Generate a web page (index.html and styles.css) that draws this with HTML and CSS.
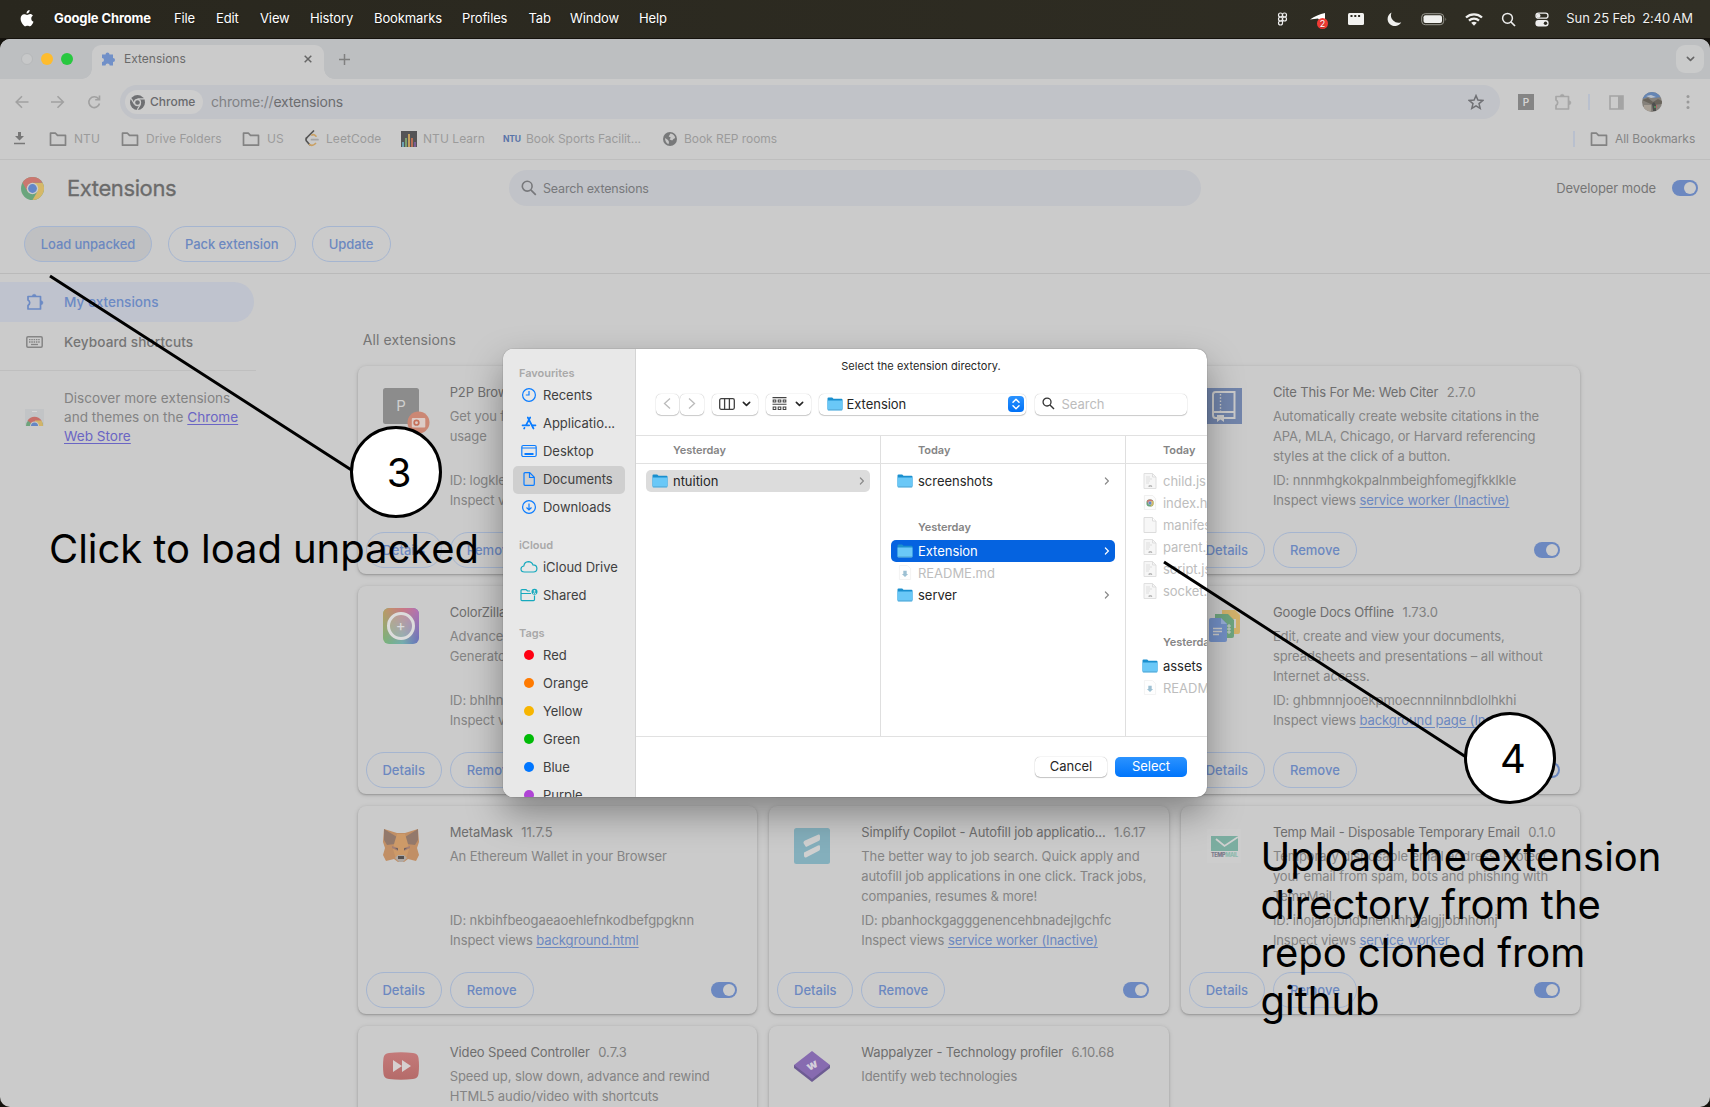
FILE: index.html
```html
<!DOCTYPE html>
<html lang="en">
<head>
<meta charset="utf-8">
<title>Extensions</title>
<link rel="stylesheet" href="styles.css">
</head>
<body>
<svg width="0" height="0" class="defs">
  <defs>
    <symbol id="folder-line" viewBox="0 0 18 16"><path d="M1.500 2.200h5l2 2.200h8v9.800h-15z" fill="none" stroke="currentColor" stroke-width="1.700" stroke-linejoin="round"/></symbol>
    <symbol id="puzzle-line" viewBox="0 0 18 18"><path d="M2 3.500h12.500v12.500H2v-3.600q1.700-1 1.700-2.700T2 7z" fill="none" stroke="currentColor" stroke-width="1.700" stroke-linejoin="round"/><path d="M6.200 3.200a2 2 0 0 1 4 0zM15 7.700a2 2 0 0 1 0 4z" fill="currentColor" stroke="currentColor" stroke-width=".4"/></symbol>
    <symbol id="magnify" viewBox="0 0 16 16"><circle cx="6.200" cy="6.200" r="4.900" fill="none" stroke="currentColor" stroke-width="1.600"/><path d="M9.800 9.800l5 5" stroke="currentColor" stroke-width="1.700"/></symbol>
    <symbol id="chevron-r" viewBox="0 0 6 10"><path d="M1.400 2L4.400 5 1.400 8" fill="none" stroke="currentColor" stroke-width="1.200" stroke-linecap="round"/></symbol>
    <symbol id="chevron-d" viewBox="0 0 10 6"><path d="M1.500 1.200L5 4.600 8.500 1.200" fill="none" stroke="currentColor" stroke-width="1.800" stroke-linecap="round" stroke-linejoin="round"/></symbol>
    <symbol id="folder-blue" viewBox="0 0 16 14"><path d="M.5 1.500q0-1 1-1h3.700l1.300 1.300h8q1 0 1 1V12h-15z" fill="#1a8fce"/><path d="M.5 3.600h15v8.600q0 1-1 1h-13q-1 0-1-1z" fill="#6ac8f7"/><path d="M.5 12.300h15q0 1.200-1 1.200h-13q-1 0-1-1.200z" fill="#58aedb"/></symbol>
    <symbol id="doc" viewBox="0 0 14 16"><path d="M1 .5h8.500L13 4v11.500H1z" fill="#f7f7f7" stroke="#dcdcdc"/><path d="M9.500.5V4H13" fill="#fff" stroke="#dcdcdc"/></symbol>
    <symbol id="doc-js" viewBox="0 0 14 16"><path d="M1 .5h8.500L13 4v11.500H1z" fill="#f6f6f6" stroke="#e0e0e0"/><path d="M9.500.5V4H13M3 4h4M3 6h6M3 8h4M3 10h3" fill="none" stroke="#dedede"/><path d="M5.800 13.700q.3-.900 1-.900h1q.7 0 1 .900" fill="none" stroke="#aaa" stroke-width="1.200"/></symbol>
    <symbol id="doc-md" viewBox="0 0 14 16"><path d="M1 .5h8.500L13 4v11.500H1z" fill="#fefefe" stroke="#f2f2f2"/><path d="M5.200 6h3.600v3.600h1.500L7 12.800 3.700 9.600h1.500z" fill="#9dc0d3"/></symbol>
    <symbol id="chrome-color" viewBox="0 0 24 24"><circle cx="12" cy="12" r="12" fill="#6aa57d"/><path d="M12 12V6h10.400A12 12 0 0 1 12 24l5.200-9z" fill="#d6b868"/><path d="M12 6h10.400A12 12 0 0 0 1.600 6l5.200 9z" fill="#cb7770"/><circle cx="12" cy="12" r="6" fill="#cbcbcb"/><circle cx="12" cy="12" r="4.600" fill="#6487c8"/></symbol>
    <symbol id="doc-chrome" viewBox="0 0 14 16"><path d="M1 .5h9L13 4v11.500H1z" fill="#fcfcfc" stroke="#eee"/><use href="#chrome-color" x="3" y="4.500" width="8" height="8"/></symbol>
  </defs>
</svg>

<header class="menubar">
  <svg class="apple" width="14" height="17" viewBox="0 0 14 17"><path d="M9.600 0c.1 1-.3 1.900-.8 2.500-.6.700-1.400 1.100-2.200 1-.1-.9.300-1.800.8-2.400C8 .500 8.900.1 9.600 0zM12.900 5.800c-1.100.7-1.700 1.600-1.600 2.900 0 1.500.9 2.500 2.200 3-.4 1.300-1 2.400-1.800 3.400-.6.800-1.200 1.200-1.900 1.200-.8 0-1.200-.5-2.300-.5s-1.600.5-2.300.5c-.8 0-1.500-.7-2.100-1.500C1.800 13.200.6 11.100.6 8.800c0-3 1.700-4.600 3.500-4.600 1.200 0 2 .700 3 .700.900 0 1.700-.8 3.100-.8 1.100 0 2.100.6 2.700 1.700z" fill="#fff"/></svg>
  <b class="m-app">Google Chrome</b>
  <span class="m-file">File</span><span class="m-edit">Edit</span><span class="m-view">View</span><span class="m-history">History</span><span class="m-bookmarks">Bookmarks</span><span class="m-profiles">Profiles</span><span class="m-tab">Tab</span><span class="m-window">Window</span><span class="m-help">Help</span>
  <svg class="status" width="280" height="30" viewBox="1270 4 280 30">
    <g fill="none" stroke="#eee" stroke-width="1.200"><rect x="1278.500" y="13" width="4" height="4" rx="2"/><rect x="1282.500" y="13" width="4" height="4" rx="2"/><rect x="1278.500" y="17" width="4" height="4" rx="2"/><circle cx="1284.500" cy="19" r="2"/><path d="M1282.500 21v2a2 2 0 1 1-2-2z"/></g>
    <path d="M1310 19.500q7-5 15-6.500v6l-4 3-3-3.500z" fill="#fff"/><circle cx="1322.500" cy="23.500" r="5.500" fill="#f23b34"/><text x="1322.500" y="26.700" font-size="9" text-anchor="middle" fill="#fff">2</text>
    <rect x="1348" y="13" width="16" height="12" rx="1.500" fill="#f2f2f0"/><path d="M1350.500 15h2v2h-2zM1354.300 15h2v2h-2zM1358.100 15h2v2h-2z" fill="#2d2b22"/>
    <path d="M1391.500 12.500a7.200 7.200 0 1 0 9.700 9.700 7.500 7.500 0 0 1-9.700-9.700z" fill="#f0f0ee"/>
    <rect x="1421.700" y="13.700" width="22" height="11" rx="3.500" fill="none" stroke="#999890"/><rect x="1423.500" y="15.300" width="18.500" height="7.800" rx="2" fill="#efefed"/><path d="M1445.500 17.500q1.500 1.500 0 3.500z" fill="#999890"/>
    <g fill="none" stroke="#f0f0ee" stroke-width="2.300"><path d="M1466 17.500a12 12 0 0 1 16 0M1469 20.600a7.500 7.500 0 0 1 10 0"/></g><path d="M1471.200 22.700q2.800-2 5.600 0l-2.800 3z" fill="#f0f0ee"/>
    <circle cx="1507.500" cy="18.300" r="4.900" fill="none" stroke="#eee" stroke-width="1.500"/><path d="M1511 22l4 4" stroke="#eee" stroke-width="1.700"/>
    <rect x="1536" y="13.200" width="12" height="5" rx="2.500" fill="none" stroke="#eee" stroke-width="1.300"/><circle cx="1538.500" cy="15.700" r="2" fill="#eee"/><rect x="1535.400" y="20" width="13.200" height="6.500" rx="3" fill="#eee"/><circle cx="1545.500" cy="23.200" r="1.700" fill="#2d2b22"/>
  </svg>
  <span class="clock">Sun 25 Feb&nbsp; 2:40&thinsp;AM</span>
</header>

<div class="browser">
  <div class="tabstrip">
    <i class="light off"></i><i class="light yellow"></i><i class="light green"></i>
    <div class="tab">
      <svg width="15" height="15" viewBox="0 0 15 15"><path d="M1 3.500h3.500a2 2 0 1 1 4 0H12V7a2 2 0 1 1 0 4v3.500H8.700a2 2 0 1 0-4.200 0H1V11a2 2 0 1 0 0-4z" fill="#7190c8"/></svg>
      <span>Extensions</span>
      <svg class="close" width="8" height="8" viewBox="0 0 8 8"><path d="M.7.7l6.600 6.600M7.300.7L.7 7.300" stroke="#666" stroke-width="1.500"/></svg>
    </div>
    <svg class="plus" width="11" height="11" viewBox="0 0 11 11"><path d="M5.500 0v11M0 5.500h11" stroke="#808080" stroke-width="1.500"/></svg>
    <div class="tabsearch"><svg width="9" height="6"><use href="#chevron-d"/></svg></div>
  </div>

  <div class="toolbar">
    <svg class="nav" width="88" height="16" viewBox="0 0 88 16" fill="none" stroke="#a1a1a1" stroke-width="1.600"><path d="M14.500 8H2.500M8 2.200L2.200 8 8 13.800M37 8h12M43.500 2.200L49.300 8l-5.800 5.800"/><path d="M84.500 4.800A5.400 5.400 0 1 0 85.500 9.500M85.500 1.500v4.200h-4.300"/></svg>
    <div class="omnibox">
      <div class="chip"><svg width="15" height="15" viewBox="0 0 16 16"><circle cx="8" cy="8" r="8" fill="#6f7073"/><circle cx="8" cy="8" r="3.200" fill="#6f7073" stroke="#cdcdcd" stroke-width="1.400"/><path d="M8 4.200h7M4.800 9.800L1.300 3.900M11.200 9.800L7.700 15.800" stroke="#cdcdcd" stroke-width="1.300"/></svg><span>Chrome</span></div>
      <span class="url"><span class="scheme">chrome://</span>extensions</span>
      <svg class="star" width="16" height="16" viewBox="0 0 16 16"><path d="M8 1.600l1.900 4.500 4.800.4-3.700 3.100 1.200 4.800L8 11.800l-4.200 2.600L5 9.600 1.300 6.500l4.800-.4z" fill="none" stroke="#707175" stroke-width="1.500"/></svg>
    </div>
    <div class="pbox">P</div>
    <svg class="t-puzzle" width="18" height="18"><use href="#puzzle-line"/></svg>
    <i class="vsep"></i>
    <svg class="t-panel" width="15" height="15" viewBox="0 0 15 15"><path d="M1 1h13v13H1z" fill="none" stroke="#a4a4a4" stroke-width="1.600"/><path d="M9 1h5v13H9z" fill="#a4a4a4"/></svg>
    <svg class="avatar" width="20" height="20" viewBox="0 0 20 20"><clipPath id="av"><circle cx="10" cy="10" r="10"/></clipPath><g clip-path="url(#av)"><path d="M0 0h20v20H0z" fill="#85817b"/><path d="M0 0h20v5L12 6 6 5 0 7z" fill="#6485b4"/><path d="M4 4l5-1 5 2-5 1z" fill="#b8c0cb"/><path d="M0 8l6-2 5 4 5-3 4 2v3l-9 1z" fill="#69645c"/><path d="M2 13h7v6H2z" fill="#a79f95"/><path d="M10 12l2-2 2 3v6h-3z" fill="#4e4f4e"/><path d="M12 14h2v2h-2z" fill="#54885c"/><path d="M14 13h1v3h-1z" fill="#b16666"/></g></svg>
    <svg class="dots" width="4" height="16" viewBox="0 0 4 16" fill="#999"><circle cx="2" cy="2.500" r="1.500"/><circle cx="2" cy="8" r="1.500"/><circle cx="2" cy="13.500" r="1.500"/></svg>
  </div>

  <div class="bookmarks">
    <svg class="dl" width="11" height="13" viewBox="0 0 11 13"><path d="M4 0h3v4h3L5.500 8.500 1 4h3zM0 10.700h11v1.600H0z" fill="#777"/></svg>
    <svg class="fl" width="18" height="16"><use href="#folder-line"/></svg><span class="b1">NTU</span>
    <svg class="fl" width="18" height="16"><use href="#folder-line"/></svg><span class="b2">Drive Folders</span>
    <svg class="fl" width="18" height="16"><use href="#folder-line"/></svg><span class="b3">US</span>
    <svg class="b4i" width="14" height="17" viewBox="0 0 14 17" fill="none" stroke-width="1.700" stroke-linecap="round"><path d="M8.500 1L1.500 8" stroke="#555"/><path d="M1.500 8q-1 1.500 0 3l3 3.500" stroke="#555"/><path d="M4.500 14.500q3 2 6-1M7 5q2-1 4 1.200" stroke="#c9a063"/><path d="M6.500 9.700H13" stroke="#a5a5a5"/></svg><span class="b4">LeetCode</span>
    <svg class="b5i" width="16" height="16" viewBox="0 0 16 16"><path d="M0 0h16v16H0z" fill="#545456"/><path d="M1 11h2v5H1z" fill="#6ca2b4"/><path d="M4 7h2v9H4z" fill="#7b9f6f"/><path d="M7 3h2v13H7z" fill="#c3a05c"/><path d="M10 7h2v9h-2z" fill="#b96f55"/><path d="M13 11h2v5h-2z" fill="#7b5c93"/></svg><span class="b5">NTU Learn</span>
    <b class="ntulogo">NTU</b><span class="b6">Book Sports Facilit...</span>
    <svg class="b7i" width="14" height="14" viewBox="0 0 14 14"><circle cx="7" cy="7" r="7" fill="#78797a"/><path d="M7.500 1.500q4 .5 4.700 4.500-2 .5-3 2.500l-2.500-1 1-2-2-1zM2 6l3 2 1 2-.5 2.200Q2 10.500 2 6z" fill="#c7c7c7"/></svg><span class="b7">Book REP rooms</span>
    <i class="vsep right"></i><svg class="fl" width="18" height="16"><use href="#folder-line"/></svg><span class="ball">All Bookmarks</span>
  </div>

  <div class="exthead">
    <svg class="clogo" width="23" height="23"><use href="#chrome-color" width="23" height="23"/></svg>
    <h1>Extensions</h1>
    <div class="search"><svg width="16" height="16"><use href="#magnify"/></svg><span>Search extensions</span></div>
    <span class="dev">Developer mode</span><i class="toggle"></i>
  </div>
  <div class="actions"><span class="pill load">Load unpacked</span><span class="pill pack">Pack extension</span><span class="pill upd">Update</span></div>

  <div class="content">
    <aside class="side">
      <div class="item sel"><svg width="18" height="18"><use href="#puzzle-line"/></svg><span>My extensions</span></div>
      <div class="item"><svg width="17" height="12" viewBox="0 0 17 12"><rect x=".8" y=".8" width="15.400" height="10.400" rx="1.200" fill="none" stroke="#858585" stroke-width="1.500"/><path d="M3 3.700h11M3 6h11" stroke="#858585" stroke-width="1.300" stroke-dasharray="1.500 .8"/><path d="M5 8.500h7" stroke="#858585" stroke-width="1.300"/></svg><span class="kb">Keyboard shortcuts</span></div>
      <div class="discover">
        <svg width="19" height="18" viewBox="0 0 19 18"><path d="M0 0h19v17H0z" fill="#c2c4c6"/><path d="M7 2h5v1H7z" fill="#d6d6d6"/><path d="M1 17a8.500 8.500 0 0 1 17 0z" fill="#6ea37c"/><path d="M2.500 11.500a8.500 8.500 0 0 1 14 0L9.500 17z" fill="#c66f69"/><path d="M10 11.500h6.500Q18 14 18 17H9.500z" fill="#d2b469"/><path d="M5 17a4.500 4.500 0 0 1 9 0z" fill="#cbcbcb"/><path d="M6 17a3.500 3.500 0 0 1 7 0z" fill="#6486c4"/></svg>
        <p>Discover more extensions<br>and themes on the <a>Chrome<br>Web Store</a></p>
      </div>
    </aside>
    <main>
      <h2>All extensions</h2>
      <div class="grid">
        <article>
          <svg class="ic" width="48" height="48" viewBox="0 0 48 48"><rect width="36" height="36" rx="2.500" fill="#8c8c8c"/><text x="18" y="23" font-size="15" text-anchor="middle" fill="#cfcfcf">P</text><circle cx="35.500" cy="34.500" r="11" fill="#cb8774"/><rect x="28.800" y="30" width="13.500" height="9.500" rx="1" fill="#dccbc6"/><circle cx="33.500" cy="34.700" r="2.300" fill="#dccbc6" stroke="#c5705a" stroke-width="1.700"/></svg>
          <div class="txt"><h3>P2P Browser <em>1.0</em></h3><p class="desc">Get you familiar with p2p data<br>usage</p><p>ID: logklehfmnbgpdkobnaecclh<br>Inspect views <a>service worker</a></p></div>
          <div class="foot"><span class="pill">Details</span><span class="pill">Remove</span><i class="toggle"></i></div>
        </article>
        <article></article>
        <article>
          <svg class="ic" width="48" height="48" viewBox="0 0 48 48"><path d="M0 0h36v36H0z" fill="#7285ab"/><g fill="none" stroke="#cbcbcb" stroke-width="2"><path d="M11 30H9.500q-2.500 0-2.500-3V6.500Q7 4 9.500 4H28.500v26H18M7 24h21"/></g><path d="M14.500 6v17" stroke="#cbcbcb" stroke-width="1.400" stroke-dasharray="1.500 1.800"/><path d="M11 27h7v7l-3.500-2.500L11 34z" fill="#cbcbcb"/></svg>
          <div class="txt"><h3>Cite This For Me: Web Citer <em>2.7.0</em></h3><p class="desc">Automatically create website citations in the<br>APA, MLA, Chicago, or Harvard referencing<br>styles at the click of a button.</p><p>ID: nnnmhgkokpalnmbeighfomegjfkklkle<br>Inspect views <a>service worker (Inactive)</a></p></div>
          <div class="foot"><span class="pill">Details</span><span class="pill">Remove</span><i class="toggle"></i></div>
        </article>
        <article>
          <div class="ic zilla"><i>+</i></div>
          <div class="txt"><h3>ColorZilla <em>3.3</em></h3><p class="desc">Advanced Eyedropper, Color<br>Generator and more</p><p>ID: bhlhnicpbhignbdhedgjhgdo<br>Inspect views <a>service worker</a></p></div>
          <div class="foot"><span class="pill">Details</span><span class="pill">Remove</span><i class="toggle"></i></div>
        </article>
        <article></article>
        <article>
          <svg class="ic" width="48" height="48" viewBox="0 0 48 48"><path d="M16 2h13l5 5v17q0 2-2 2H16z" fill="#d3b26b"/><path d="M22 12h7v7h-7z" fill="none" stroke="#cbcbcb" stroke-width="2"/><path d="M9 6h13l6 6v16q0 2-2 2H9z" fill="#6fa57f"/><path d="M18 18h7M18 21h7M18 24h7M23 16v10" stroke="#cbcbcb"/><path d="M5 10h10l6 6v16q0 2-2 2H5q-2 0-2-2V12q0-2 2-2z" fill="#7390c6"/><path d="M15 10l6 6h-6z" fill="#98aed6"/><path d="M7 20.500h9M7 23.500h9M7 26.500h6" stroke="#cbcbcb" stroke-width="1.500"/></svg>
          <div class="txt"><h3>Google Docs Offline <em>1.73.0</em></h3><p class="desc">Edit, create and view your documents,<br>spreadsheets and presentations – all without<br>Internet access.</p><p>ID: ghbmnnjooekpmoecnnnilnnbdlolhkhi<br>Inspect views <a>background page (Inactive)</a></p></div>
          <div class="foot"><span class="pill">Details</span><span class="pill">Remove</span><i class="toggle"></i></div>
        </article>
        <article>
          <svg class="ic" width="48" height="48" viewBox="0 0 48 48"><path d="M1 1l13 4h8l13-4 1 13-2 6 2 7-3 6-8-2-4 3h-6l-4-3-8 2-3-6 2-7-2-6z" fill="#c18f65"/><path d="M1 1l13 8 1 3-3 4-8 1-3-5zM35 1L22 9l-1 3 3 4 8 1 3-5z" fill="#93796b"/><path d="M14 6h8l3 10 1 5-3 10H13l-3-10 1-5z" fill="#cd9a68"/><path d="M9 18l6 2v3l-6-3zM27 18l-6 2v3l6-3z" fill="#a37f74"/><path d="M12 20l3 .500V22zM24 20l-3 .500V22z" fill="#5e5652"/><path d="M12 30l3-3h6l3 3-4 4h-4z" fill="#b0a9a4"/><path d="M15 28h6v3h-6z" fill="#54504f"/></svg>
          <div class="txt"><h3>MetaMask <em>11.7.5</em></h3><p class="desc">An Ethereum Wallet in your Browser</p><p>ID: nkbihfbeogaeaoehlefnkodbefgpgknn<br>Inspect views <a>background.html</a></p></div>
          <div class="foot"><span class="pill">Details</span><span class="pill">Remove</span><i class="toggle"></i></div>
        </article>
        <article>
          <svg class="ic" width="48" height="48" viewBox="0 0 48 48"><rect width="36" height="36" rx="2.500" fill="#84afbc"/><path d="M10 16q-1.500-2 1-3.500L24.500 6.500Q26 6 26 8v3q0 1.500-1.500 2L12 19zM12 29.500q-2 .5-2-2v-3l14-7q2-1 2 1v2.500q0 1.500-1.500 2z" fill="#d0d0d0"/></svg>
          <div class="txt"><h3>Simplify Copilot - Autofill job applicatio... <em>1.6.17</em></h3><p class="desc">The better way to job search. Quick apply and<br>autofill job applications in one click. Track jobs,<br>companies, resumes &amp; more!</p><p>ID: pbanhockgagggenencehbnadejlgchfc<br>Inspect views <a>service worker (Inactive)</a></p></div>
          <div class="foot"><span class="pill">Details</span><span class="pill">Remove</span><i class="toggle"></i></div>
        </article>
        <article>
          <svg class="ic" width="48" height="48" viewBox="0 0 48 48"><path d="M1 1h34v34H1z" fill="#cdcdcd"/><path d="M5 8h27v15H5z" fill="#7bada0"/><path d="M10 11l8.500 7L32 9" fill="none" stroke="#d0d0d0" stroke-width="1.800"/><text x="5" y="29.300" font-size="5.500" font-weight="800" textLength="27" fill="#7a7a8a">TEMP<tspan fill="#8ebaae">MAIL</tspan></text></svg>
          <div class="txt"><h3>Temp Mail - Disposable Temporary Email <em>0.1.0</em></h3><p class="desc">Temporary disposable email address. Protect<br>your email from spam, bots and phishing with<br>TempMail.</p><p>ID: inojafojbhdpnehkhhfjalgjjobnhomj<br>Inspect views <a>service worker</a></p></div>
          <div class="foot"><span class="pill">Details</span><span class="pill">Remove</span><i class="toggle"></i></div>
        </article>
        <article>
          <svg class="ic" width="48" height="48" viewBox="0 0 48 48"><defs><linearGradient id="rd" x2="0" y2="1"><stop stop-color="#c47a7a"/><stop offset="1" stop-color="#b56b69"/></linearGradient></defs><path d="M6 5q12-1.500 24 0 5 .5 5.500 5 1 8 0 16-.5 4.500-5.500 5-12 1.500-24 0-5-.5-5.500-5-1-8 0-16Q1 5.500 6 5z" fill="url(#rd)"/><path d="M10 12l9 6-9 6zM19 12l9 6-9 6z" fill="#d6d0d0"/></svg>
          <div class="txt"><h3>Video Speed Controller <em>0.7.3</em></h3><p class="desc">Speed up, slow down, advance and rewind<br>HTML5 audio/video with shortcuts</p></div>
        </article>
        <article>
          <svg class="ic" width="48" height="48" viewBox="0 0 48 48"><path d="M0 20l18 14 18-14v-3H0z" fill="#6d5b93"/><path d="M18 3l18 14-18 14L0 17z" fill="#876bb0"/><text transform="translate(18 17) rotate(-28)" y="4" font-size="12" font-weight="900" text-anchor="middle" fill="#d3cedb">w</text></svg>
          <div class="txt"><h3>Wappalyzer - Technology profiler <em>6.10.68</em></h3><p class="desc">Identify web technologies</p></div>
        </article>
      </div>
    </main>
  </div>
</div>

<div class="dialog">
  <nav class="places">
    <h4 class="first">Favourites</h4>
    <div class="pl"><svg width="16" height="16" viewBox="0 0 16 16" fill="none" stroke="#0a7cff" stroke-width="1.200"><circle cx="8" cy="8" r="6.400"/><path d="M8 4v4H4.800"/></svg>Recents</div>
    <div class="pl"><svg width="16" height="16" viewBox="0 0 16 16" fill="none" stroke="#0a7cff" stroke-width="1.700" stroke-linecap="round"><path d="M6.800 2.500l5.700 11M9.200 2.500L5 10.200M1.500 10.300h6.700M11.500 10.300h3M3.500 12.800l-.4.700"/></svg>Applicatio...</div>
    <div class="pl"><svg width="16" height="16" viewBox="0 0 16 16" fill="none" stroke="#0a7cff" stroke-width="1.200"><rect x=".8" y="2.500" width="14.400" height="11" rx="1.500"/><path d="M1 5h14"/><path d="M3.500 11h9" stroke-width="1.800"/></svg>Desktop</div>
    <div class="pl on"><svg width="16" height="16" viewBox="0 0 16 16" fill="none" stroke="#0a7cff" stroke-width="1.200"><path d="M4 1.700h4.700l4.600 4.600v7q0 1-1 1H4q-1 0-1-1V2.700q0-1 1-1zM8.500 2v4.500H13"/></svg>Documents</div>
    <div class="pl"><svg width="16" height="16" viewBox="0 0 16 16" fill="none" stroke="#0a7cff" stroke-width="1.200"><circle cx="8" cy="8" r="6.400"/><path d="M8 4.500v6.500M5.500 8.500L8 11l2.500-2.500"/></svg>Downloads</div>
    <h4>iCloud</h4>
    <div class="pl"><svg width="18" height="16" viewBox="0 0 18 16" fill="none" stroke="#17a9bd" stroke-width="1.200"><path d="M4.500 13q-3.500 0-3.500-3 0-2.500 2.800-3Q4.500 3 8.300 2.700q3.500 0 4.600 3.100 4 0 4 3.700 0 3.500-3.500 3.500z"/></svg>iCloud Drive</div>
    <div class="pl"><svg width="18" height="16" viewBox="0 0 18 16" fill="none" stroke="#17a9bd" stroke-width="1.200"><path d="M10 4H7.500L6 2.600H2q-1 0-1 1v9q0 1 1 1h11.500q1 0 1-1V8.500M1 6.500h10"/><circle cx="14.500" cy="4.800" r="3" fill="#17a9bd" stroke="none"/><circle cx="14.500" cy="3.900" r=".9" fill="#e8e8e8" stroke="none"/><path d="M12.900 6.600q1.600-1.600 3.200 0" stroke="#e8e8e8" stroke-width="1"/></svg>Shared</div>
    <h4>Tags</h4>
    <div class="pl"><i class="red"></i>Red</div>
    <div class="pl"><i class="orange"></i>Orange</div>
    <div class="pl"><i class="yellow"></i>Yellow</div>
    <div class="pl"><i class="green"></i>Green</div>
    <div class="pl"><i class="blue"></i>Blue</div>
    <div class="pl"><i class="purple"></i>Purple</div>
  </nav>
  <section class="pane">
    <div class="prompt">Select the extension directory.</div>
    <div class="controls">
      <div class="btn b-back"><svg width="8" height="13" viewBox="0 0 8 13"><path d="M7 1.500L1.500 6.500 7 11.500" fill="none" stroke="#bbb" stroke-width="1.300"/></svg></div>
      <div class="btn b-fwd"><svg width="8" height="13" viewBox="0 0 8 13"><path d="M1 1.500l5.500 5L1 11.500" fill="none" stroke="#bbb" stroke-width="1.300"/></svg></div>
      <div class="btn b-view"><svg width="16" height="12" viewBox="0 0 16 12" fill="none" stroke="#3f3f3f" stroke-width="1.300"><rect x=".7" y=".7" width="14.600" height="10.600" rx="1.500"/><path d="M5.600.7v10.600M10.400.7v10.600"/></svg><svg width="9" height="6"><use href="#chevron-d"/></svg></div>
      <div class="btn b-group"><svg width="15" height="14" viewBox="0 0 15 14" fill="none" stroke="#444" stroke-width="1.100"><path d="M.5.600h14M.5 7.200h14"/><path d="M1.200 3h2.600v2H1.200zM6.200 3h2.600v2H6.200zM11.200 3h2.600v2h-2.600zM1.200 10h2.600v2.500H1.200zM6.200 10h2.600v2.500H6.200zM11.200 10h2.600v2.500h-2.600z"/></svg><svg width="9" height="6"><use href="#chevron-d"/></svg></div>
      <div class="btn b-popup"><svg width="16" height="14"><use href="#folder-blue"/></svg><span>Extension</span><em><svg width="16" height="16" viewBox="0 0 16 16" fill="none" stroke="#fff" stroke-width="1.500" stroke-linecap="round" stroke-linejoin="round"><path d="M5 6.200L8 3.300l3 2.900M5 9.800l3 2.900 3-2.900"/></svg></em></div>
      <div class="btn b-search"><svg width="13" height="13"><use href="#magnify"/></svg><span>Search</span></div>
    </div>
    <div class="cols">
      <div class="col">
        <h5>Yesterday</h5>
        <div class="row grey"><svg width="16" height="14"><use href="#folder-blue"/></svg><span>ntuition</span><svg class="chev" width="6" height="10"><use href="#chevron-r"/></svg></div>
      </div>
      <div class="col">
        <h5>Today</h5>
        <div class="row"><svg width="16" height="14"><use href="#folder-blue"/></svg><span>screenshots</span><svg class="chev" width="6" height="10"><use href="#chevron-r"/></svg></div>
        <h6>Yesterday</h6>
        <div class="row active"><svg width="16" height="14"><use href="#folder-blue"/></svg><span>Extension</span><svg class="chev" width="6" height="10"><use href="#chevron-r"/></svg></div>
        <div class="row dis"><svg width="16" height="15"><use href="#doc-md"/></svg><span>README.md</span></div>
        <div class="row"><svg width="16" height="14"><use href="#folder-blue"/></svg><span>server</span><svg class="chev" width="6" height="10"><use href="#chevron-r"/></svg></div>
      </div>
      <div class="col last">
        <h5>Today</h5>
        <div class="row dis"><svg width="16" height="16"><use href="#doc-js"/></svg><span>child.js</span></div>
        <div class="row dis"><svg width="16" height="15"><use href="#doc-chrome"/></svg><span>index.html</span></div>
        <div class="row dis"><svg width="16" height="16"><use href="#doc"/></svg><span>manifest.json</span></div>
        <div class="row dis"><svg width="16" height="16"><use href="#doc-js"/></svg><span>parent.js</span></div>
        <div class="row dis"><svg width="16" height="16"><use href="#doc-js"/></svg><span>script.js</span></div>
        <div class="row dis"><svg width="16" height="16"><use href="#doc-js"/></svg><span>socket.js</span></div>
        <h6 class="tall">Yesterday</h6>
        <div class="row"><svg width="16" height="14"><use href="#folder-blue"/></svg><span>assets</span></div>
        <div class="row dis"><svg width="16" height="15"><use href="#doc-md"/></svg><span>README.md</span></div>
      </div>
    </div>
    <div class="confirm"><span class="cancel">Cancel</span><span class="select">Select</span></div>
  </section>
</div>

<svg class="lines" width="1710" height="1107" viewBox="0 0 1710 1107"><g stroke="#000" stroke-width="3"><path d="M50 276l303 195M1164 562l302 195"/><circle cx="396" cy="472" r="44.500" fill="#fff"/><circle cx="1510" cy="758" r="44.500" fill="#fff"/></g></svg>
<div class="num n3">3</div>
<div class="num n4">4</div>
<div class="note note3">Click to load unpacked</div>
<div class="note note4">Upload the extension<br>directory from the<br>repo cloned from<br>github</div>
</body>
</html>
```
FILE: styles.css
```css
* { box-sizing: border-box; margin: 0; padding: 0; }
html, body { width: 1710px; height: 1107px; overflow: hidden; }
body { background: #15130e; font-family: Inter, "Liberation Sans", sans-serif; font-size: 13px; color: #6b6b6b; position: relative; }
svg { display: block; flex: none; }
i, em { font-style: normal; }
i { display: block; flex: none; }
.defs { position: absolute; }
span, b { white-space: nowrap; }

.menubar { height: 39px; background: linear-gradient(90deg, #29271e, #302e24); border-bottom: 1px solid #15120d; display: flex; align-items: center; padding: 0 17px 2px 20px; color: #fff; letter-spacing: -.12px; text-shadow: 0 1px 2px rgba(0,0,0,.4); }
.menubar > * { flex: none; }
.m-app { width: 120px; margin-left: 20px; }
.m-file { width: 42px; } .m-edit { width: 44px; } .m-view { width: 50px; } .m-history { width: 64px; } .m-bookmarks { width: 88px; } .m-profiles { width: 66.500px; } .m-tab { width: 41.500px; } .m-window { width: 69px; }
.status { position: absolute; left: 1270px; top: 4px; }
.clock { margin-left: auto; color: #f0f0ee; letter-spacing: -.08px; }

.browser { height: 1068px; background: #cbcbcb; border-radius: 10px; overflow: hidden; }
.tabstrip { height: 40px; background: #bdbfc1; display: flex; align-items: center; padding-left: 21px; }
.light { width: 12px; height: 12px; border-radius: 50%; margin-right: 8px; }
.off { background: #c7c8c9; border: 1px solid #b6b8ba; }
.light.yellow { background: #febc2e; } .light.green { background: #28c840; }
.tab { align-self: flex-end; width: 232px; height: 34px; margin-left: 11px; border-radius: 9px 9px 0 0; background: #cbcbcb; display: flex; align-items: center; padding: 0 12px 7px 9px; font-size: 12px; gap: 8px; color: #6a6a6a; position: relative; }
.tab::before, .tab::after { content: ""; position: absolute; bottom: 0; width: 10px; height: 10px; }
.tab::before { left: -10px; background: radial-gradient(circle at 0 0, transparent 9.500px, #cbcbcb 10px); }
.tab::after { right: -10px; background: radial-gradient(circle at 100% 0, transparent 9.500px, #cbcbcb 10px); }
.close { margin-left: auto; }
.plus { margin-left: 14.500px; }
.tabsearch { margin-left: auto; margin-right: 6px; width: 28px; height: 28px; border-radius: 9px; background: #cacbcb; display: flex; align-items: center; justify-content: center; color: #666; }

.toolbar { height: 46px; display: flex; align-items: center; padding-left: 14px; }
.nav { margin-right: 18px; }
.omnibox { width: 1380px; height: 34px; border-radius: 17px; background: #c1c3c8; display: flex; align-items: center; padding: 0 16px 0 5px; margin-right: 18px; }
.chip { width: 78px; height: 24px; border-radius: 12px; background: #cdcdcd; display: flex; align-items: center; gap: 5px; padding-left: 5px; font-size: 12px; font-weight: 500; color: #696a6d; }
.chip span, .url { position: relative; top: -1px; }
.url { margin-left: 8px; font-size: 14px; color: #6c6d70; letter-spacing: -.2px; }
.scheme { color: #808184; }
.star { margin-left: auto; }
.pbox { width: 16px; height: 16px; background: #858585; color: #d3d3d3; font-size: 10px; font-weight: 600; text-align: center; line-height: 16px; }
.t-puzzle { margin-left: 20px; color: #a6a6a6; }
.vsep { width: 2px; height: 16px; background: #b9c0ce; margin-left: 16px; }
.t-panel { margin-left: 19px; }
.avatar { margin-left: 18px; }
.dots { margin-left: 24px; }

.bookmarks { height: 35px; border-bottom: 1px solid #bebebe; display: flex; align-items: center; padding: 0 15px 7px 14px; font-size: 12px; color: #9b9b9b; letter-spacing: .05px; }
.fl { color: #838383; margin-right: 7px; }
.dl { margin-right: 24px; }
.b1 { width: 47px; } .b2 { width: 96px; } .b3 { width: 38px; } .b4i { margin-right: 7px; } .b4 { width: 75px; }
.b5i { margin-right: 6px; } .b5 { width: 80px; }
.ntulogo { width: 23px; font-size: 8.500px; color: #5873a8; letter-spacing: -.2px; }
.b6 { width: 137px; letter-spacing: -.05px; } .b7i { margin-right: 7px; }
.b7 { letter-spacing: -.05px; }
.right { margin-left: auto; margin-right: 15px; }
.ball { color: #858585; width: 80px; letter-spacing: -.08px; }

.exthead { height: 57px; display: flex; align-items: center; padding: 0 12px 1px 21px; }
h1 { font-size: 22px; font-weight: 400; color: #6b6b6b; width: 442px; margin-left: 23px; letter-spacing: -.4px; -webkit-text-stroke: .3px #6b6b6b; }
.search { width: 692px; height: 36px; border-radius: 18px; background: #c1c3c8; display: flex; align-items: center; gap: 6px; padding-left: 12px; color: #77787b; font-size: 12.500px; letter-spacing: -.18px; }
.dev { margin-left: auto; color: #767676; margin-right: 16px; letter-spacing: -.1px; }
.toggle { width: 26px; height: 16px; border-radius: 8px; background: #6c88c0; position: relative; }
.toggle::after { content: ""; position: absolute; right: 2px; top: 2px; width: 12px; height: 12px; border-radius: 50%; background: #cbcbcb; }
.actions { height: 57px; padding: 9px 24px 0; display: flex; gap: 16px; border-bottom: 1px solid #bababa; }
.pill { height: 36px; border: 1px solid #a5b5d0; border-radius: 18px; color: #6c88c0; font-weight: 500; display: flex; align-items: center; justify-content: center; letter-spacing: -.08px; }
.load { width: 128px; background: #bfc0c2; } .pack { width: 127.500px; } .upd { width: 79px; }

.content { display: flex; }
.side { width: 357.700px; flex: none; padding-top: 8px; }
.item { width: 254px; height: 40px; display: flex; align-items: center; padding-left: 26px; font-weight: 500; font-size: 13.600px; color: #757575; }
.item svg { margin-right: 20px; } .item .kb { margin-left: 1px; letter-spacing: .1px; }
.sel { color: #6c8ac4; background: #bfc3ce; border-radius: 0 20px 20px 0; }
.discover { width: 256px; margin-top: 8px; border-top: 1px solid #bfbfbf; padding: 18px 0 0 25px; display: flex; align-items: center; color: #838383; font-size: 13.600px; line-height: 19px; }
.discover p { margin-left: 20px; white-space: nowrap; }
.discover a { color: #6a65c4; text-decoration: underline; text-underline-offset: 2px; }
main { padding-top: 56px; }
h2 { font-size: 14px; font-weight: 400; color: #757575; margin-left: 5px; line-height: 20px; margin-bottom: 16px; letter-spacing: .1px; }
.grid { display: grid; grid-template-columns: repeat(3, 399.600px); grid-auto-rows: 208px; gap: 12px; }
article { background: #cbcbcb; border-radius: 8px; box-shadow: 0 1px 2px rgba(0,0,0,.22), 0 1px 4px 1px rgba(0,0,0,.08); padding: 16px 20px 0 8px; display: grid; grid-template-columns: 84px 1fr; grid-template-rows: 150px 36px; color: #848484; line-height: 20px; letter-spacing: -.09px; }
.ic { margin: 6px 0 0 17px; }
h3 { font-size: 13px; font-weight: 400; color: #6e6e6e; line-height: 20px; margin-bottom: 4px; white-space: nowrap; letter-spacing: -.12px; }
h3 em { margin-left: 5px; color: #808080; letter-spacing: 0; }
article p { white-space: nowrap; }
.desc { height: 64px; }
article a { color: #6c88c0; text-decoration: underline; text-underline-offset: 2px; }
.foot { grid-column: 1 / 3; display: flex; align-items: center; gap: 8px; }
.foot .pill { width: 76px; letter-spacing: 0; } .foot .pill + .pill { width: 84px; }
.foot .toggle { margin-left: auto; }
.zilla { width: 36px; height: 36px; border-radius: 6px; background: linear-gradient(90deg, #78b478, #70afb0 55%, #6571bc); position: relative; overflow: hidden; }
.zilla::before { content: ""; position: absolute; inset: 0; background: linear-gradient(90deg, #bd9b62, #cb7682 55%, #b870b5); -webkit-mask: linear-gradient(#000, transparent); }
.zilla i { position: absolute; left: 4px; top: 4px; width: 28px; height: 28px; border: 3px solid #dcdcdc; border-radius: 50%; color: #dcdcdc; font-size: 15px; line-height: 21px; text-align: center; background: rgba(203,203,203,.3); }

.dialog { position: absolute; left: 503px; top: 349px; width: 704px; height: 448px; border-radius: 10px; background: #fff; overflow: hidden; display: flex; color: #262626; box-shadow: 0 0 1px rgba(0,0,0,.6), 0 16px 36px rgba(0,0,0,.36); letter-spacing: -.03px; }
.places { width: 133px; flex: none; background: #e8e8e8; border-right: 1px solid #d4d4d4; padding-left: 10px; color: #404040; overflow: hidden; }
.places h4 { height: 32px; padding: 15px 0 0 6px; line-height: 17px; font-size: 11px; font-weight: 600; color: #a9a9a9; }
.places h4.first { height: 32.500px; padding-top: 15.500px; }
.pl { height: 28px; width: 112px; border-radius: 5px; display: flex; align-items: center; white-space: nowrap; padding: 0 0 1.500px 30px; }
.pl svg, .pl i { margin-left: -22px; margin-right: 6px; }
.pl svg[width="18"] { margin-left: -23px; margin-right: 5px; }
.pl i { width: 10px; height: 10px; border-radius: 50%; margin: 0 9px 0 -19px; }
.on { background: #cfcfcf; }
.red { background: #ff0012; } .orange { background: #ff7a00; } .pl .yellow { background: #f7b500; } .pl .green { background: #00bb07; } .blue { background: #0076ff; } .purple { background: #b044d6; }

.pane { flex: 1; min-width: 0; display: flex; flex-direction: column; }
.prompt { font-size: 11px; line-height: 16px; text-align: center; margin: 9px 0 19px; padding-right: 1px; letter-spacing: .05px; }
.controls { height: 42px; display: flex; align-items: flex-start; padding-left: 19.500px; }
.btn { height: 21px; margin-top: .5px; border-radius: 5px; box-shadow: 0 0 1px rgba(0,0,0,.35), 0 1px 1px rgba(0,0,0,.18); display: flex; align-items: center; justify-content: center; padding-bottom: 1px; }
.b-back { width: 23px; margin-right: 1px; } .b-fwd { width: 24px; margin-right: 8px; }
.b-view { width: 46px; gap: 7px; margin-right: 8px; } .b-group { width: 45px; gap: 8px; margin-right: 8px; }
.b-popup { width: 207px; justify-content: flex-start; padding: 0 2px 1px 8px; gap: 4px; margin-right: 9px; }
.b-popup em { margin-left: auto; width: 16px; height: 16px; border-radius: 4px; background: linear-gradient(#2b93ff, #0071f7); }
.b-search { width: 152px; justify-content: flex-start; padding-left: 7px; gap: 7px; color: #bcbcbc; }
.b-search svg { color: #333; }
.cols { height: 302px; display: flex; border-top: 1px solid #e1e1e1; border-bottom: 1px solid #e1e1e1; position: relative; }
.cols::before { content: ""; position: absolute; left: 0; right: 0; top: 27px; height: 1px; background: #e1e1e1; }
.col { width: 245px; flex: none; border-right: 1px solid #dfdfdf; padding: 0 10px; }
.col.last { width: 82px; padding-right: 0; border: 0; overflow: hidden; }
h5, h6 { font-size: 11px; font-weight: 600; color: #858585; padding-left: 27px; }
h5 { height: 34px; line-height: 28px; }
h6 { height: 48px; padding-top: 26px; line-height: 18px; }
h6.tall { height: 53px; padding-top: 31px; }
.row { height: 22px; border-radius: 5px; display: flex; align-items: center; padding: 0 5px 1px 6px; gap: 5px; white-space: nowrap; }
.row.grey { background: #dcdcdc; }
.row.active { background: #0563e0; color: #fff; }
.row.dis { color: #bdbdbd; }
.chev { margin-left: auto; color: #8a8a8a; }
.active .chev { color: #fff; }
.confirm { display: flex; justify-content: flex-end; padding: 20px 20px 0 0; gap: 8px; }
.cancel, .select { width: 72px; height: 20px; border-radius: 5px; line-height: 19px; text-align: center; }
.cancel { box-shadow: 0 0 1px rgba(0,0,0,.4), 0 1px 1px rgba(0,0,0,.2); }
.select { background: linear-gradient(#2b93ff, #0075fb); color: #fff; }

.lines { position: absolute; left: 0; top: 0; }
.num, .note { position: absolute; color: #000; font-size: 40px; line-height: 48px; white-space: nowrap; }
.num { width: 40px; text-align: center; }
.n3 { left: 379px; top: 449px; } .n4 { left: 1493px; top: 735px; }
.note3 { left: 49px; top: 525px; letter-spacing: -.06px; } .note4 { left: 1260.500px; top: 833px; }
```
